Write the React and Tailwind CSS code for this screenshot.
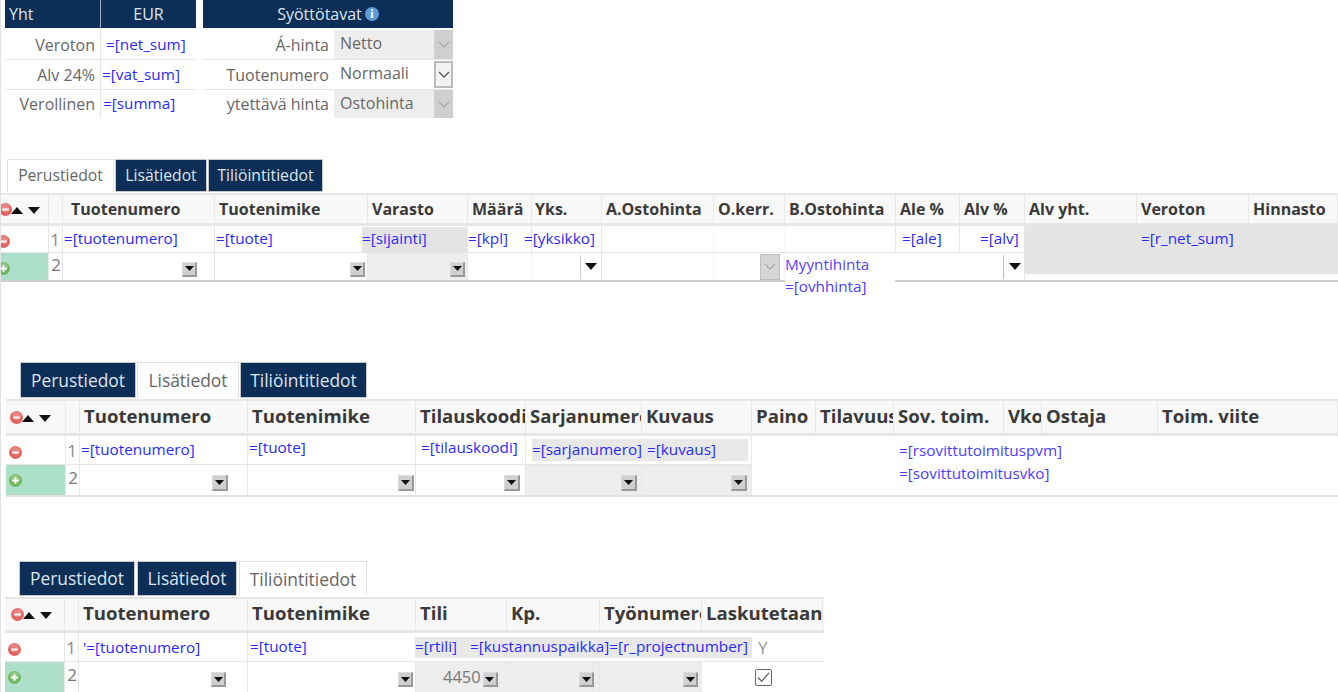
import clsx from 'clsx';

const blue = 'text-[#2a2aff]';

function Cell({ w, className, children }) {
  return (
    <div className={clsx('relative flex h-full shrink-0 items-center border-r border-[#e8e8e8]', w, className)}>
      {children}
    </div>
  );
}

function Val({ className, children }) {
  return <span className={clsx('whitespace-nowrap text-[15.3px] leading-none', blue, className)}>{children}</span>;
}

function Tri({ up, className }) {
  return (
    <svg viewBox="0 0 12 7" className={clsx('h-[7px] w-[12px] shrink-0', className)}>
      <path d={up ? 'M0 7 6 0 12 7Z' : 'M0 0 6 7 12 0Z'} fill="#111" />
    </svg>
  );
}

function Drop({ className }) {
  return (
    <span className={clsx('flex h-[15px] w-[15px] shrink-0 items-center justify-center border-t border-l border-t-[#dcdcdc] border-l-[#dcdcdc] border-r-2 border-b-2 border-r-[#999] border-b-[#999] bg-[#cfcfcf]', className)}>
      <svg viewBox="0 0 9 5" className="h-[5px] w-[9px]"><path d="M0 0 4.5 5 9 0Z" fill="#111" /></svg>
    </span>
  );
}

function Chevron({ stroke = '#aaa' }) {
  return (
    <svg viewBox="0 0 12 7" className="h-[7px] w-[12px]">
      <path d="M1 1 6 6 11 1" fill="none" stroke={stroke} strokeWidth="1.3" />
    </svg>
  );
}

function Circle({ plus, className }) {
  return (
    <svg viewBox="0 0 12 12" className={clsx('h-[13px] w-[13px] shrink-0', className)}>
      <circle cx="6" cy="6" r="6" fill={plus ? '#6fb85f' : '#e2635f'} />
      <circle cx="6" cy="4.5" r="4" fill="#fff" opacity=".22" />
      <path d={plus ? 'M3 6H9M6 3V9' : 'M3 6H9'} stroke="#fff" strokeWidth="1.8" />
    </svg>
  );
}

function HeadIcons({ className }) {
  return (
    <div className={clsx('flex items-center', className)}>
      <Circle />
      <Tri up className="ml-[-1px] mt-[2px]" />
      <Tri className="ml-[5px] mt-[2px]" />
    </div>
  );
}

function Head({ cols, size, className, icons }) {
  return (
    <div className={clsx('flex border-t-2 border-b-[3px] border-[#e6e6e6] bg-[#f8f8f8]', className)}>
      {cols.map((c, i) => (
        <Cell key={i} w={c.w} className="overflow-hidden">
          {i === 0 && icons}
          <span className={clsx('whitespace-nowrap font-bold text-[#3a3a3a]', size, c.pad)}>{c.label}</span>
        </Cell>
      ))}
    </div>
  );
}

function Tabs({ active, widths, className, size }) {
  const names = ['Perustiedot', 'Lisätiedot', 'Tiliöintitiedot'];
  return (
    <div className={clsx('flex', className)}>
      {names.map((n, i) => (
        <div
          key={n}
          className={clsx(
            'flex h-full shrink-0 items-center justify-center whitespace-nowrap',
            size,
            widths[i],
            i === active
              ? 'bg-white text-[#666] border-x border-t border-[#e2e2e2]'
              : 'border border-[#c9c9c9] bg-[#0d2f57] text-[#dde5ee]',
          )}
        >
          {n}
        </div>
      ))}
    </div>
  );
}

const cols1 = [
  { w: 'w-[48px]', label: '' },
  { w: 'w-[14px]', label: '' },
  { w: 'w-[152px]', label: 'Tuotenumero', pad: 'pl-[8px]' },
  { w: 'w-[153px]', label: 'Tuotenimike', pad: 'pl-[4px]' },
  { w: 'w-[100px]', label: 'Varasto', pad: 'pl-[4px]' },
  { w: 'w-[64px]', label: 'Määrä', pad: 'pl-[4px]' },
  { w: 'w-[70px]', label: 'Yks.', pad: 'pl-[3px]' },
  { w: 'w-[112px]', label: 'A.Ostohinta', pad: 'pl-[4px]' },
  { w: 'w-[71px]', label: 'O.kerr.', pad: 'pl-[4px]' },
  { w: 'w-[111px]', label: 'B.Ostohinta', pad: 'pl-[4px]' },
  { w: 'w-[64px]', label: 'Ale %', pad: 'pl-[4px]' },
  { w: 'w-[65px]', label: 'Alv %', pad: 'pl-[4px]' },
  { w: 'w-[112px]', label: 'Alv yht.', pad: 'pl-[4px]' },
  { w: 'w-[112px]', label: 'Veroton', pad: 'pl-[4px]' },
  { w: 'w-[89px]', label: 'Hinnasto', pad: 'pl-[4px]' },
];

const cols2 = [
  { w: 'w-[60px]', label: '' },
  { w: 'w-[14px]', label: '' },
  { w: 'w-[168px]', label: 'Tuotenumero', pad: 'pl-[4px]' },
  { w: 'w-[168px]', label: 'Tuotenimike', pad: 'pl-[4px]' },
  { w: 'w-[110px]', label: 'Tilauskoodi', pad: 'pl-[4px]' },
  { w: 'w-[116px]', label: 'Sarjanumero', pad: 'pl-[4px]' },
  { w: 'w-[110px]', label: 'Kuvaus', pad: 'pl-[4px]' },
  { w: 'w-[64px]', label: 'Paino', pad: 'pl-[4px]' },
  { w: 'w-[78px]', label: 'Tilavuus', pad: 'pl-[4px]' },
  { w: 'w-[110px]', label: 'Sov. toim.', pad: 'pl-[4px]' },
  { w: 'w-[38px]', label: 'Vko', pad: 'pl-[4px]' },
  { w: 'w-[116px]', label: 'Ostaja', pad: 'pl-[4px]' },
  { w: 'w-[180px]', label: 'Toim. viite', pad: 'pl-[4px]' },
];

const cols3 = [
  { w: 'w-[60px]', label: '' },
  { w: 'w-[14px]', label: '' },
  { w: 'w-[169px]', label: 'Tuotenumero', pad: 'pl-[4px]' },
  { w: 'w-[168px]', label: 'Tuotenimike', pad: 'pl-[4px]' },
  { w: 'w-[91px]', label: 'Tili', pad: 'pl-[4px]' },
  { w: 'w-[93px]', label: 'Kp.', pad: 'pl-[4px]' },
  { w: 'w-[102px]', label: 'Työnumero', pad: 'pl-[4px]' },
  { w: 'w-[121px]', label: 'Laskutetaan', pad: 'pl-[4px]' },
];

function Num({ children, className }) {
  return <span className={clsx('text-[17px] leading-none text-[#777]', className)}>{children}</span>;
}

export default function App() {
  return (
    <div className="h-[692px] w-[1338px] overflow-hidden border-l border-[#e2e2e2] bg-white font-['Open_Sans',sans-serif]">
      {/* yhteenveto + syöttötavat */}
      <div className="flex h-[118px] pl-[4px]">
        <div className="w-[191px] text-[16px] text-[#666]">
          <div className="flex h-[28px] bg-[#0d2f57] text-[#dde5ee]">
            <div className="flex w-[96px] items-center border-r border-[#9fb0c2] pl-[4px]">Yht</div>
            <div className="flex flex-1 items-center justify-center">EUR</div>
          </div>
          <div className="mt-[2px] flex h-[30px] border-b border-[#e6e6e6]">
            <div className="flex w-[96px] items-center justify-end border-r border-[#e6e6e6] pr-[5px]">Veroton</div>
            <Val className="self-center pl-[5px]">=[net_sum]</Val>
          </div>
          <div className="flex h-[30px] border-b border-[#e6e6e6]">
            <div className="flex w-[96px] items-center justify-end border-r border-[#e6e6e6] pr-[5px]">Alv 24%</div>
            <Val className="self-center pl-[1px]">=[vat_sum]</Val>
          </div>
          <div className="flex h-[28px]">
            <div className="flex w-[96px] items-center justify-end border-r border-[#e6e6e6] pr-[5px]">Verollinen</div>
            <Val className="self-center pl-[2px]">=[summa]</Val>
          </div>
        </div>
        <div className="ml-[7px] w-[250px] text-[16px] text-[#666]">
          <div className="flex h-[28px] items-center justify-center gap-[3px] bg-[#0d2f57] text-[#dde5ee]">
            Syöttötavat
            <span className="flex h-[14px] w-[14px] items-center justify-center rounded-full bg-[#5b9bd8] font-['Liberation_Serif',serif] text-[12px] font-bold leading-none text-white">i</span>
          </div>
          <div className="mt-[2px] flex h-[30px] border-b border-[#e6e6e6]">
            <div className="flex w-[131px] items-center justify-end pr-[5px]">Á-hinta</div>
            <div className="flex flex-1 items-center justify-between bg-[#eeeeee] pl-[6px]">
              <span className="mb-[3px]">Netto</span>
              <span className="flex h-full w-[19px] items-center justify-center bg-[#cfcfcf]"><Chevron /></span>
            </div>
          </div>
          <div className="flex h-[30px] border-b border-[#e6e6e6]">
            <div className="flex w-[131px] items-center justify-end pr-[5px]">Tuotenumero</div>
            <div className="flex flex-1 items-center justify-between pl-[6px]">
              <span className="mb-[3px]">Normaali</span>
              <span className="flex h-[27px] w-[19px] items-center justify-center border-2 border-[#bbbbbb] bg-[#f2f2f2]"><Chevron stroke="#555" /></span>
            </div>
          </div>
          <div className="flex h-[28px]">
            <div className="flex w-[131px] items-center justify-end overflow-hidden whitespace-nowrap pr-[5px]">ytettävä hinta</div>
            <div className="flex flex-1 items-center justify-between bg-[#eeeeee] pl-[6px]">
              <span className="mb-[2px]">Ostohinta</span>
              <span className="flex h-full w-[19px] items-center justify-center bg-[#cfcfcf]"><Chevron /></span>
            </div>
          </div>
        </div>
      </div>

      {/* Perustiedot */}
      <Tabs active={0} size="text-[15.7px]" className="ml-[6px] mt-[41px] h-[33px] gap-[1px]" widths={['w-[107px]', 'w-[92px]', 'w-[115px]']} />
      <Head cols={cols1} size="text-[16px]" className="mt-[1px] h-[33px]" icons={<HeadIcons className="ml-[-2px]" />} />
      <div className="flex h-[27px] border-b border-[#e6e6e6]">
        <Cell w="w-[48px]"><Circle className="ml-[-4px] mt-[5px]" /></Cell>
        <Cell w="w-[14px]" className="justify-end"><Num className="pr-[2px] text-[#888]">1</Num></Cell>
        <Cell w="w-[152px]"><Val className="pl-[1px]">=[tuotenumero]</Val></Cell>
        <Cell w="w-[153px]"><Val className="pl-[1px]">=[tuote]</Val></Cell>
        <Cell w="w-[100px]"><div className="ml-[-6px] flex h-[25px] w-[106px] items-center bg-[#e4e4e4]"><Val>=[sijainti]</Val></div></Cell>
        <Cell w="w-[64px]"><Val>=[kpl]</Val></Cell>
        <Cell w="w-[70px]"><Val className="ml-[-8px]">=[yksikko]</Val></Cell>
        <Cell w="w-[112px]" className="border-[#f5f5f5]" />
        <Cell w="w-[71px]" className="border-[#f5f5f5]" />
        <Cell w="w-[111px]" />
        <Cell w="w-[64px]"><Val className="pl-[6px]">=[ale]</Val></Cell>
        <Cell w="w-[65px]"><Val className="pl-[20px]">=[alv]</Val></Cell>
        <div className="flex h-[26px] w-[313px] items-center bg-[#e4e4e4] pl-[116px]"><Val>=[r_net_sum]</Val></div>
      </div>
      <div className="flex h-[29px] border-b-2 border-[#cdcdcd]">
        <Cell w="w-[48px]" className="bg-[#aedfc9]"><Circle plus className="ml-[-4px] mt-[3px]" /></Cell>
        <Cell w="w-[14px]" className="justify-end"><Num className="mb-[4px] pr-[1px]">2</Num></Cell>
        <Cell w="w-[152px]"><Drop className="ml-[119px] mt-[5px]" /></Cell>
        <Cell w="w-[153px]"><Drop className="ml-[135px] mt-[5px]" /></Cell>
        <Cell w="w-[100px]" className="bg-[#ededed]"><Drop className="ml-[82px] mt-[5px]" /></Cell>
        <Cell w="w-[64px]" className="border-[#f5f5f5]" />
        <Cell w="w-[70px]">
          <span className="ml-[48px] h-[24px] w-px bg-[#cfcfcf]" />
          <Tri className="ml-[4px]" />
        </Cell>
        <Cell w="w-[112px]" className="border-[#f5f5f5]" />
        <Cell w="w-[71px]" className="border-[#f5f5f5]">
          <span className="ml-[46px] flex h-[26px] w-[20px] items-center justify-center border border-[#bdbdbd] bg-[#d6d6d6]"><Chevron /></span>
        </Cell>
        <div className="relative h-full w-[111px] shrink-0">
          <div className="absolute left-0 top-0 z-10 flex h-[43px] w-[110px] flex-col gap-[7px] bg-white pt-[4px]">
            <Val className="text-[#5a3dff]">Myyntihinta</Val>
            <Val className="text-[#4a3dff]">=[ovhhinta]</Val>
          </div>
        </div>
        <div className="h-full w-[64px] shrink-0" />
        <Cell w="w-[65px]">
          <span className="ml-[43px] h-[24px] w-px bg-[#bfbfbf]" />
          <Tri className="ml-[5px]" />
        </Cell>
        <div className="h-[21px] w-[313px] bg-[#e4e4e4]" />
      </div>

      {/* Lisätiedot */}
      <Tabs active={1} size="text-[17.4px]" className="ml-[19px] mt-[80px] h-[36px] gap-[1px]" widths={['w-[116px]', 'w-[102px]', 'w-[127px]']} />
      <div className="ml-[5px] mt-[1px] w-[1333px]">
        <Head cols={cols2} size="mb-[2px] text-[18.6px]" className="h-[37px]" icons={<HeadIcons className="ml-[4px]" />} />
        <div className="flex h-[29px]">
          <div className="flex h-full w-[746px] shrink-0 border-b border-[#e6e6e6]">
            <Cell w="w-[60px]"><Circle className="ml-[3px] mt-[4px]" /></Cell>
            <Cell w="w-[14px]" className="justify-end"><Num className="pr-[2px] text-[#888]">1</Num></Cell>
            <Cell w="w-[168px]"><Val className="pl-[1px]">=[tuotenumero]</Val></Cell>
            <Cell w="w-[168px]"><Val className="mb-[4px] pl-[1px]">=[tuote]</Val></Cell>
            <Cell w="w-[110px]"><Val className="mb-[4px] pl-[5px]">=[tilauskoodi]</Val></Cell>
            <Cell w="w-[116px]" className="border-r-0"><div className="ml-[6px] flex h-[22px] w-[110px] items-center bg-[#e8e8e8]"><Val>=[sarjanumero]</Val></div></Cell>
            <Cell w="w-[110px]"><div className="flex h-[22px] w-[106px] items-center bg-[#e8e8e8]"><Val className="pl-[5px]">=[kuvaus]</Val></div></Cell>
          </div>
          <div className="h-full w-[64px] shrink-0" />
          <div className="h-full w-[78px] shrink-0" />
          <div className="relative h-full w-[110px] shrink-0">
            <div className="absolute left-[5px] top-[7px] flex flex-col gap-[8px]">
              <Val className="text-[#4a3dff]">=[rsovittutoimituspvm]</Val>
              <Val className="text-[#4a3dff]">=[sovittutoimitusvko]</Val>
            </div>
          </div>
        </div>
        <div className="flex h-[32px] border-b-2 border-[#e2e2e2]">
          <Cell w="w-[60px]" className="bg-[#aedfc9]"><Circle plus className="ml-[3px]" /></Cell>
          <Cell w="w-[14px]" className="justify-end"><Num className="mb-[6px] pr-[1px]">2</Num></Cell>
          <Cell w="w-[168px]"><Drop className="ml-[132px] mt-[5px] h-[16px] w-[16px]" /></Cell>
          <Cell w="w-[168px]"><Drop className="ml-[150px] mt-[5px] h-[16px] w-[16px]" /></Cell>
          <Cell w="w-[110px]"><Drop className="ml-[88px] mt-[5px] h-[16px] w-[16px]" /></Cell>
          <Cell w="w-[116px]" className="bg-[#ededed]"><Drop className="ml-[95px] mt-[5px] h-[16px] w-[16px]" /></Cell>
          <Cell w="w-[110px]" className="bg-[#ededed]"><Drop className="ml-[89px] mt-[5px] h-[16px] w-[16px]" /></Cell>
        </div>
      </div>

      {/* Tiliöintitiedot */}
      <Tabs active={2} size="text-[17.4px]" className="ml-[18px] mt-[64px] h-[35px] gap-[2px]" widths={['w-[116px]', 'w-[100px]', 'w-[128px]']} />
      <div className="ml-[4px] mt-[1px] w-[819px]">
        <Head cols={cols3} size="mb-[4px] text-[18.6px]" className="h-[36px]" icons={<HeadIcons className="ml-[6px]" />} />
        <div className="flex h-[29px] border-b border-[#e6e6e6]">
          <Cell w="w-[60px]"><Circle className="ml-[3px] mt-[4px]" /></Cell>
          <Cell w="w-[14px]" className="justify-end"><Num className="pr-[2px] text-[#888]">1</Num></Cell>
          <Cell w="w-[169px]"><Val className="mt-[2px] pl-[4px]">'=[tuotenumero]</Val></Cell>
          <Cell w="w-[168px]" className="border-r-0"><Val className="pl-[2px]">=[tuote]</Val></Cell>
          <div className="ml-[-1px] flex h-[21px] w-[337px] shrink-0 items-center self-center bg-[#e8e8e8]">
            <Val>=[rtili]</Val>
            <Val className="pl-[13px]">=[kustannuspaikka]</Val>
            <Val>=[r_projectnumber]</Val>
          </div>
          <span className="self-center pl-[6px] text-[17px] leading-none text-[#999]">Y</span>
        </div>
        <div className="flex h-[30px]">
          <Cell w="w-[60px]" className="bg-[#aedfc9]"><Circle plus className="ml-[3px]" /></Cell>
          <Cell w="w-[14px]" className="justify-end"><Num className="mb-[6px] pr-[1px]">2</Num></Cell>
          <Cell w="w-[169px]"><Drop className="ml-[132px] mt-[5px]" /></Cell>
          <Cell w="w-[168px]"><Drop className="ml-[150px] mt-[5px]" /></Cell>
          <Cell w="w-[91px]" className="bg-[#ededed]">
            <span className="ml-[27px] text-[16.5px] text-[#777]">4450</span>
            <Drop className="ml-[2px] mt-[5px]" />
          </Cell>
          <Cell w="w-[93px]" className="bg-[#ededed]"><Drop className="ml-[72px] mt-[5px]" /></Cell>
          <Cell w="w-[102px]" className="bg-[#ededed]"><Drop className="ml-[83px] mt-[5px]" /></Cell>
          <div className="flex w-[121px] items-center pl-[53px]">
            <span className="flex h-[17px] w-[17px] items-center justify-center rounded-[2px] border border-[#666]">
              <svg viewBox="0 0 14 12" className="h-[11px] w-[13px]"><path d="M1 6 5 10 13 1" fill="none" stroke="#555" strokeWidth="1.3" /></svg>
            </span>
          </div>
        </div>
      </div>
    </div>
  );
}
